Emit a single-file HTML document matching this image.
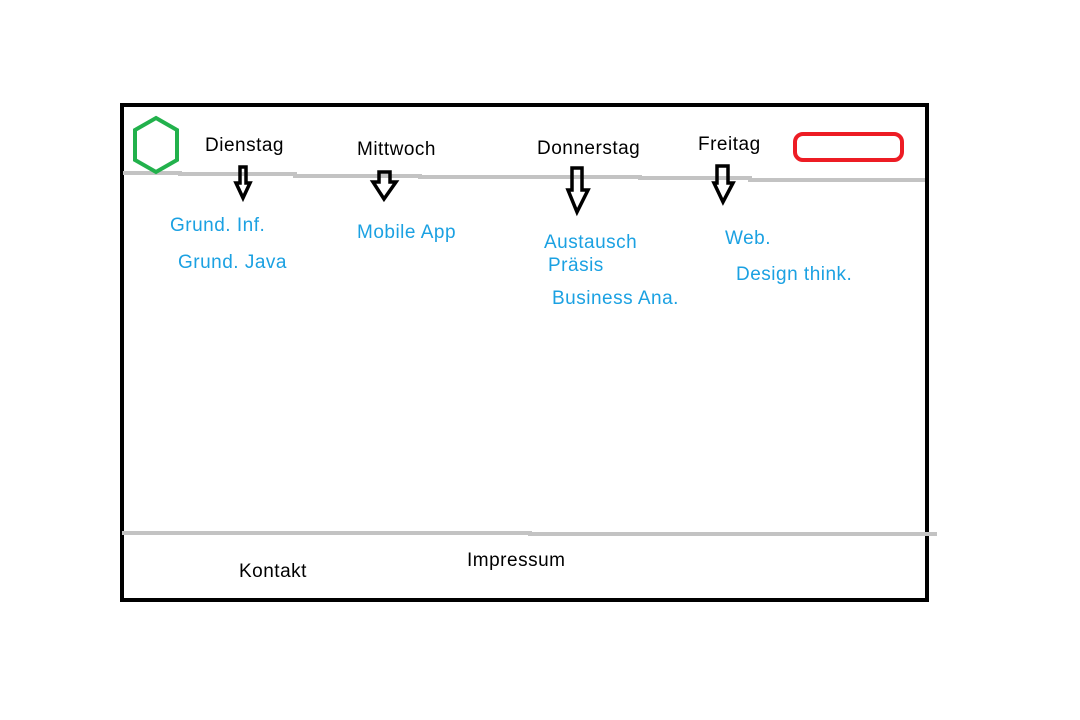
<!DOCTYPE html>
<html><head><meta charset="utf-8"><style>
html,body{margin:0;padding:0;background:#fff;width:1080px;height:720px;overflow:hidden}
svg{display:block}
text{font-family:"Liberation Sans",sans-serif;font-size:19px;letter-spacing:0.5px}
.k{fill:#000}.b{fill:#1ba1e2}
</style></head><body>
<svg width="1080" height="720" viewBox="0 0 1080 720">
<rect x="122" y="105" width="805" height="495" fill="none" stroke="#000" stroke-width="4"/>
<polyline points="123,173 180,173 180,174 295,174 295,176 420,176 420,177 640,177 640,178 750,178 750,180 925,180" fill="none" stroke="#c3c3c3" stroke-width="4"/>
<polyline points="122,533 530,533 530,534 937,534" fill="none" stroke="#c3c3c3" stroke-width="4"/>
<polygon points="156,118 177,130 177,160 156,172 135,160 135,130" fill="none" stroke="#22b14c" stroke-width="4"/>
<rect x="795" y="134" width="107" height="26" rx="8" fill="none" stroke="#ed1c24" stroke-width="4"/>
<g fill="none" stroke="#000" stroke-width="3.5" stroke-linejoin="miter">
<polygon points="240,167 246,167 246,183 250,183 243,198 236,183 240,183"/>
<polygon points="379,172 390,172 390,182 396,182 384,199 373,182 379,182"/>
<polygon points="572,168 582,168 582,190 588,190 577,212 568,190 572,190"/>
<polygon points="717,166 728,166 728,183 733,183 723,202 714,183 717,183"/>
</g>
<text class="k" x="205" y="151">Dienstag</text>
<text class="k" x="357" y="155">Mittwoch</text>
<text class="k" x="537" y="154">Donnerstag</text>
<text class="k" x="698" y="150">Freitag</text>
<text class="b" x="170" y="231">Grund. Inf.</text>
<text class="b" x="178" y="268">Grund. Java</text>
<text class="b" x="357" y="238">Mobile App</text>
<text class="b" x="544" y="248">Austausch</text>
<text class="b" x="548" y="271">Präsis</text>
<text class="b" x="552" y="304">Business Ana.</text>
<text class="b" x="725" y="244">Web.</text>
<text class="b" x="736" y="280">Design think.</text>
<text class="k" x="239" y="577">Kontakt</text>
<text class="k" x="467" y="566">Impressum</text>
</svg>
</body></html>
